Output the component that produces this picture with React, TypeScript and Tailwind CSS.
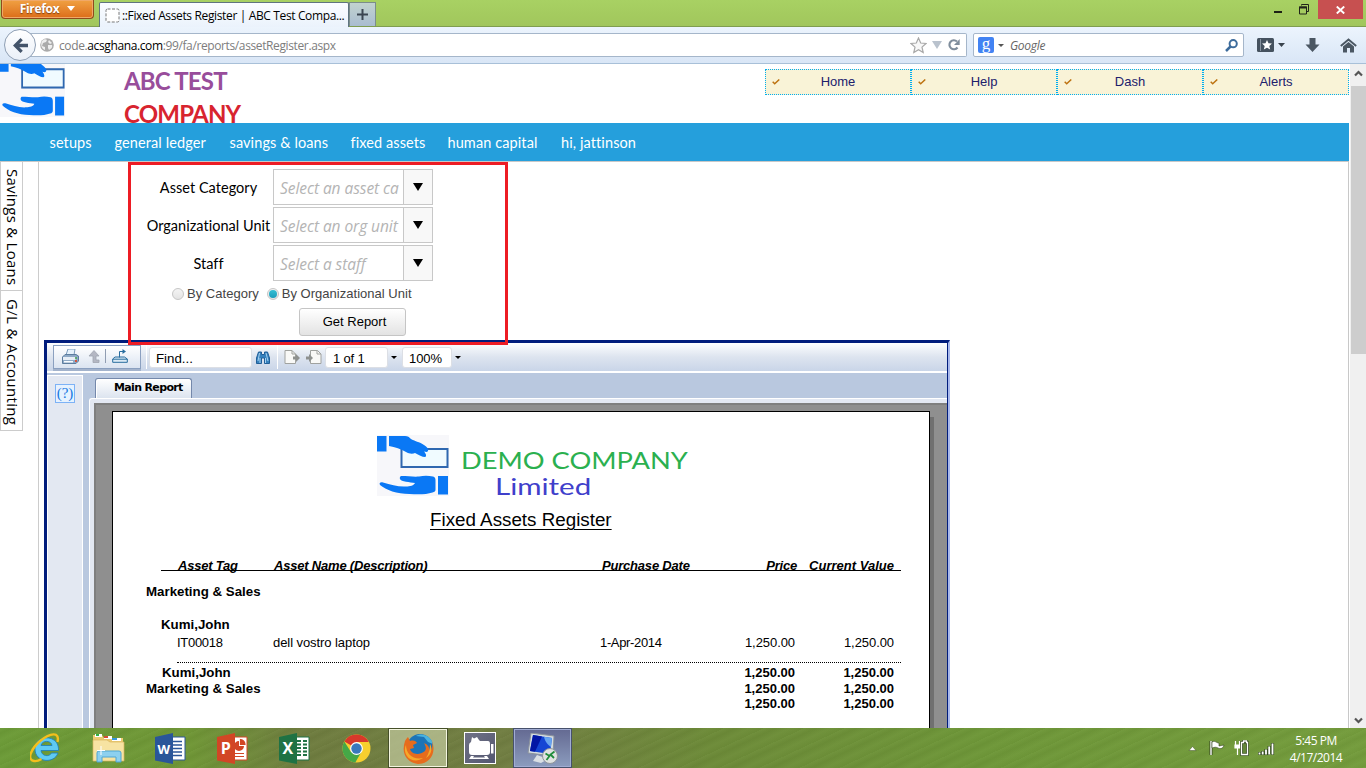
import type { ReactNode } from "react";

const SEGOE = "font-['Open_Sans','Noto_Sans',sans-serif]";
const CALIBRI = "font-['Lato',sans-serif]";

function HandsLogo({ className }: { className: string }) {
  return (
    <svg className={className} viewBox="0 0 72 61" preserveAspectRatio="none">
      <rect width="72" height="61" fill="#f7f7fa" />
      <rect x="24.500" y="14" width="46" height="18" fill="#f0fbff" stroke="#2f68b0" strokeWidth="2" />
      <path d="M0 1h9.500v15.500H0z" fill="#0a78f5" />
      <path d="M12 1h16c3 0 4 1 6 3 3 2 9 3 13 6 3 2 5 4 4 6-1 1.500-2 1-4 .5 2 2 3 5 1 5.500-3 0-6-2-10-4-2 1-6 1-9-1-5-3-11-5-17-6z" fill="#0a78f5" />
      <path d="M61 41h10v18.500H61z" fill="#0a78f5" />
      <path d="M24 41c7 0 13 1 18 .5 5-1 9-1 14 0 2 .5 2.500 2 2.500 4v9c0 2-1 2.500-3 3-6 2-14 2-23 1.500C20 59 9 55 3 50c-1-2 0-3 3-2.500 8 2 15 4.500 23 4 4 0 8-1 9-3.500-5-1-14-1-15-4-.5-1 0-2.500 1-3z" fill="#0a78f5" />
    </svg>
  );
}

function Chevron({ up = false }: { up?: boolean }) {
  return (
    <svg className="h-[9px] w-[9px]" viewBox="0 0 9 9">
      <path d={up ? "M1 6.500 4.500 3 8 6.500" : "M1 2.500 4.500 6 8 2.500"} fill="none" stroke="#555" strokeWidth="2.200" />
    </svg>
  );
}

function Triangle({ className }: { className: string }) {
  return (
    <svg className={className} viewBox="0 0 10 10" preserveAspectRatio="none">
      <path d="M0 0h10L5 10z" fill="currentColor" />
    </svg>
  );
}

function TitleBar() {
  return (
    <div className="flex h-[27px] items-start border-b border-[#7f9d50] bg-linear-to-b from-[#a8d163] to-[#a1c65c]">
      <div className="ml-px flex h-[19px] w-[93px] items-center justify-center gap-2 rounded-b-[4px] border border-t-0 border-[#8e4a1c] bg-linear-to-b from-[#f0a142] to-[#dc6d17] pb-px text-white shadow-[inset_0_0_0_1px_#f0a868]">
        <span className={`${SEGOE} text-[12px] font-bold leading-none tracking-[-0.300px] [text-shadow:0_1px_1px_#84400f]`}>Firefox</span>
        <Triangle className="h-[5px] w-[8px]" />
      </div>
      <div className="ml-[5px] mt-[2px] flex h-[26px] w-[250px] items-center rounded-t-[2px] border border-b-0 border-[#5f7480] bg-linear-to-b from-[#fbfdff] to-[#eaf2fc] pl-[5px]">
        <svg className="h-[15px] w-[15px] shrink-0" viewBox="0 0 15 15">
          <rect x="1" y="1" width="13" height="13" rx="1.500" fill="#fff" stroke="#777" strokeDasharray="3 1.500" />
        </svg>
        <span className={`${SEGOE} ml-[2px] whitespace-nowrap text-[12px] tracking-[-0.360px] text-black`}>::Fixed Assets Register | ABC Test Compa...</span>
      </div>
      <div className="mt-[2px] flex h-[24px] w-[27px] items-center justify-center border border-b-0 border-[#7b8d8c] bg-linear-to-b from-[#c2d3cf] to-[#a9bcd0]">
        <svg className="h-[11px] w-[11px]" viewBox="0 0 11 11">
          <path d="M5.500 0v11M0 5.500h11" stroke="#3b4652" strokeWidth="2" />
        </svg>
      </div>
      <div className="ml-auto flex h-[19px] items-center">
        <div className="mr-[17px] mt-[5px] h-[2.500px] w-[8px] bg-[#1d2114]" />
        <svg className="mr-[9px] h-[11px] w-[10px]" viewBox="0 0 10 11">
          <path d="M2.500 1.500v-1h7v7H8M.5 3h7v7h-7z" fill="none" stroke="#20241a" />
          <path d="M0 3.500h8" stroke="#20241a" strokeWidth="2" />
        </svg>
        <div className="mr-[3px] flex h-[19px] w-[45px] items-center justify-center bg-[#c75050]">
          <svg className="h-[8px] w-[9px]" viewBox="0 0 9 8">
            <path d="M.8.5 8.200 7.500M8.200.5.8 7.500" stroke="#fff" strokeWidth="1.900" />
          </svg>
        </div>
      </div>
    </div>
  );
}

function Toolbar() {
  return (
    <div className="flex h-[37px] items-center border-b border-[#a8c0d8] bg-linear-to-b from-[#ecf4fd] to-[#d9e6f6]">
      <div className="z-10 ml-1 flex h-[32px] w-[32px] shrink-0 items-center justify-center rounded-full border border-[#8f9fb4] bg-linear-to-b from-white to-[#eaf0f8]">
        <svg className="h-[17px] w-[17px]" viewBox="0 0 17 17">
          <path d="M1 8.500 8.500 1l2.300 2.200L7.300 6.800H16v3.400H7.300l3.500 3.600L8.500 16z" fill="#44546a" />
        </svg>
      </div>
      <div className="-ml-2 flex h-[24px] w-[939px] items-center rounded-r-[2px] border border-l-0 border-[#a5b6ca] bg-white">
        <svg className="ml-[12px] h-[14px] w-[14px]" viewBox="0 0 14 14">
          <circle cx="7" cy="7" r="6.800" fill="#ababab" />
          <path d="M2 3c2-2 4-2 5-1l-1 2-3 1-1 3 3 1v3C2 11 0 7 2 3zM9 2l3 3-2 1-2-2zM8 7l4 0c1 2-1 4-3 5L8 10z" fill="#eee" />
        </svg>
        <div className={`${SEGOE} ml-[5px] pt-[2px] text-[12px] tracking-[-0.380px] text-[#7d7d7d]`}>
          code.<span className="text-black">acsghana.com</span>:99/fa/reports/assetRegister.aspx
        </div>
        <div className="ml-auto flex items-center">
          <svg className="mr-[5px] h-[17px] w-[17px]" viewBox="0 0 17 17">
            <path d="m8.500 1 2.200 5 5.300.5-4 3.600 1.200 5.400-4.700-2.800-4.700 2.800L5 10.100 1 6.500 6.300 6z" fill="#f8f8f8" stroke="#a8a8a8" strokeWidth="1.200" />
          </svg>
          <Triangle className="mr-[6px] h-[8px] w-[10px] text-[#b9c2cd]" />
          <svg className="mr-[6px] h-[12px] w-[12px]" viewBox="0 0 12 12">
            <path d="M9.500 8.500A4.500 4.500 0 1 1 9 2.500" fill="none" stroke="#7f8d9c" strokeWidth="2.100" />
            <path d="M11.700 0v6H6z" fill="#7f8d9c" />
          </svg>
        </div>
      </div>
      <div className="ml-[6px] flex h-[24px] w-[271px] items-center rounded-[2px] border border-[#a5b6ca] bg-white pl-1">
        <div className="flex h-4 w-4 items-center justify-center rounded-[2px] bg-[#4283f3] pb-[3px] font-['Liberation_Serif',serif] text-[17px] leading-none text-white">g</div>
        <Triangle className="ml-[4px] h-[3px] w-[6px] text-[#555]" />
        <span className={`${SEGOE} ml-[6px] pt-[2px] text-[12px] italic tracking-[-0.300px] text-[#666]`}>Google</span>
        <svg className="ml-auto mr-[5px] h-[13px] w-[13px]" viewBox="0 0 13 13">
          <path d="M1 12 5.500 7.500" stroke="#3d6c9c" strokeWidth="2.500" />
          <circle cx="8.200" cy="4.700" r="3.600" fill="#fff" stroke="#3d6c9c" strokeWidth="2" />
        </svg>
      </div>
      <svg className="ml-[13px] h-[14px] w-[17px]" viewBox="0 0 17 14">
        <rect width="17" height="14" rx="1.500" fill="#45525f" />
        <path d="M3.500 1v12" stroke="#8793a0" />
        <path d="m10 2 1.500 3.300 3.500.3-2.700 2.300.9 3.600L10 9.700l-3.200 1.800.9-3.600L5 5.600l3.500-.3z" fill="#fff" />
      </svg>
      <Triangle className="ml-[4px] h-[4px] w-[7px] text-[#39434d]" />
      <svg className="ml-[20px] h-[14px] w-[15px]" viewBox="0 0 15 14">
        <path d="M4.500 0h6v6.500h4L7.500 14 .5 6.500h4z" fill="#4b5763" />
      </svg>
      <svg className="ml-[20px] h-[15px] w-[17px]" viewBox="0 0 17 15">
        <path d="m.8 8 7.700-6.500L16.200 8" fill="none" stroke="#4b5763" strokeWidth="1.900" />
        <path d="M3 8.500 8.500 4 14 8.500V14.500h-4V10H7v4.500H3z" fill="#4b5763" />
      </svg>
    </div>
  );
}

const quickLinks = ["Home", "Help", "Dash", "Alerts"];
const menu = [
  { text: "setups", cls: "w-[65px]" },
  { text: "general ledger", cls: "w-[115px]" },
  { text: "savings & loans", cls: "w-[121px]" },
  { text: "fixed assets", cls: "w-[97px]" },
  { text: "human capital", cls: "w-[113.500px]" },
  { text: "hi, jattinson", cls: "w-[100px]" },
];

function PageHeader() {
  return (
    <>
      <header className="flex h-[59px] items-start">
        <HandsLogo className="-mt-[9px] h-[62px] w-[65px] shrink-0" />
        <div className={`ml-[59px] text-[24px] font-bold leading-[33px] ${CALIBRI}`}>
          <div className="whitespace-nowrap tracking-[-0.800px] text-[#984d9b]">ABC TEST</div>
          <div className="whitespace-nowrap tracking-[-0.800px] text-[#d8242f]">COMPANY</div>
        </div>
        <div className="ml-auto mt-[5px] flex">
          {quickLinks.map((q) => (
            <a key={q} className="flex h-[26px] w-[146px] items-center border border-dotted border-[#00aeef] bg-[#f9f3d7] font-['Liberation_Sans',sans-serif] text-[13px] text-[#20206c]">
              <svg className="mb-px ml-[6px] h-[6px] w-[8px] shrink-0" viewBox="0 0 8 6">
                <path d="m.7 2.800 2 2L7.300.5" fill="none" stroke="#bd7210" strokeWidth="1.500" />
              </svg>
              <span className="mr-[14px] flex-1 text-center">{q}</span>
            </a>
          ))}
        </div>
      </header>
      <nav className={`flex h-[38px] items-center bg-[#259fdc] pl-[49.500px] pt-px text-[14.500px] tracking-[0.100px] text-white ${CALIBRI}`}>
        {menu.map((m) => (
          <a key={m.text} className={`whitespace-nowrap ${m.cls}`}>{m.text}</a>
        ))}
      </nav>
    </>
  );
}

function SideTabs() {
  return (
    <aside className={`flex w-[39px] shrink-0 border-r border-[#ccc] text-[15px] leading-[19px] text-black ${SEGOE}`}>
      <div className="w-[23px]">
        <div className="flex h-[129px] w-[23px] items-center justify-center border border-t-0 border-[#ccc] pl-[2px] pt-[3px] [writing-mode:vertical-rl]">
          <span className="whitespace-nowrap tracking-[0.250px]">Savings &amp; Loans</span>
        </div>
        <div className="flex h-[140px] w-[23px] items-center justify-center border border-t-0 border-[#ccc] pl-[2px] pt-[3px] [writing-mode:vertical-rl]">
          <span className="whitespace-nowrap tracking-[0.350px]">G/L &amp; Accounting</span>
        </div>
      </div>
    </aside>
  );
}

function SelectRow({ label, placeholder }: { label: string; placeholder: string }) {
  return (
    <div className="flex items-center">
      <label className={`w-[125px] whitespace-nowrap pt-[2px] text-center text-[14.500px] tracking-[0.030px] text-black ${CALIBRI}`}>{label}</label>
      <div className="ml-[2px] flex h-[36px] w-[160px] border border-[#c8c8c8]">
        <div className={`w-[129px] whitespace-nowrap pl-[6px] pt-px text-[15.500px] italic leading-[34px] tracking-[-0.060px] text-[#b4b4b4] ${SEGOE}`}>
          {placeholder}
        </div>
        <div className="flex w-[29px] items-center justify-center border-l border-[#c8c8c8] bg-[#f8f8f8]">
          <Triangle className="h-[8px] w-[10px] text-black" />
        </div>
      </div>
    </div>
  );
}

function Radio({ on = false, children }: { on?: boolean; children: ReactNode }) {
  return (
    <label className="flex items-center gap-[3px] whitespace-nowrap">
      <span className="flex h-3 w-3 items-center justify-center rounded-full border border-[#c6c6c6] bg-linear-to-b from-[#f4f4f4] to-[#e4e4e4]">
        {on && <span className="h-2 w-2 rounded-full bg-linear-to-b from-[#35bfd4] to-[#1b9dbb]" />}
      </span>
      <span className="pt-px">{children}</span>
    </label>
  );
}

function FilterForm() {
  return (
    <form className="relative z-10 ml-[89px] h-[183px] w-[380px] border-[3px] border-[#ed1c24]">
      <div className="flex flex-col gap-[2px] pl-[15px] pt-[4px]">
        <SelectRow label="Asset Category" placeholder="Select an asset ca" />
        <SelectRow label="Organizational Unit" placeholder="Select an org unit" />
        <SelectRow label="Staff" placeholder="Select a staff" />
      </div>
      <div className="mt-[4px] flex h-[17px] items-center gap-[8px] pl-[41px] font-['Liberation_Sans',sans-serif] text-[13px] tracking-[0.020px] text-[#444]">
        <Radio>By Category</Radio>
        <Radio on>By Organizational Unit</Radio>
      </div>
      <button type="button" className="ml-[168px] mt-[6px] flex h-[28px] w-[107px] items-center justify-center rounded-[3px] border border-[#c5c5c5] bg-linear-to-b from-white to-[#e3e3e3] pl-[4px] font-['Liberation_Sans',sans-serif] text-[13px] text-black">
        Get Report
      </button>
    </form>
  );
}

function ViewerToolbar() {
  return (
    <div className="flex h-[30px] items-center border-b-2 border-white bg-linear-to-b from-[#fdfeff] via-[#dde4ef] to-[#c9d5e8] font-['Liberation_Sans',sans-serif] text-[13.300px] text-black">
      <div className="ml-[6px] flex h-[24px] w-[88px] shrink-0 items-center border border-[#8ba0c0] bg-linear-to-b from-white to-[#dbe4f1] pb-[2px] shadow-[0_2px_0_#a3b3cc]">
        <svg className="ml-[8px] h-[15px] w-[17px]" viewBox="0 0 17 15">
          <path d="m4 6 2-6h7l-1 6z" fill="#e6f2fc" stroke="#7d9cbd" />
          <path d="M.5 8 3 5.500h11L16.500 7v5L14 14.500H.5z" fill="#8ea9c6" stroke="#5d7d9f" />
          <path d="M1 8h12.500v3H1z" fill="#e7eef6" />
          <path d="M2 12h9v1.500H2z" fill="#f7fbff" />
          <circle cx="14" cy="9" r="1" fill="#4aa84e" />
          <path d="M13 11h2v2h-2z" fill="#d2543e" />
        </svg>
        <svg className="ml-[9px] h-[13px] w-[12px]" viewBox="0 0 12 13">
          <path d="M6 .5 11 6H8v4h3v2.500H5V6H1z" fill="#b4b7c3" stroke="#a0a4b0" strokeWidth=".8" />
        </svg>
        <div className="ml-[5px] h-[14px] w-px bg-[#909db2]" />
        <svg className="ml-[6px] h-[14px] w-[16px]" viewBox="0 0 16 14">
          <path d="M.7 10 3 8h9.500l2.800 2v3.300H.7z" fill="#dbeaf5" stroke="#286d9e" />
          <path d="M.7 10.200h14.600M7.500 8.500V2.500h4" fill="none" stroke="#286d9e" />
          <path d="m10.500 0 3.500 2.500L10.500 5z" fill="#286d9e" />
        </svg>
      </div>
      <div className="ml-[5px] h-[24px] w-px bg-white" />
      <div className="ml-[2px] mt-px flex h-[21px] w-[103px] items-center rounded-[3px] border border-[#dcdfe5] bg-white pl-[6px] pt-[2px]">Find...</div>
      <svg className="ml-[4px] h-[13px] w-[14px]" viewBox="0 0 14 13">
        <path d="M2.500 1h3v2.500h3V1h3L13.500 7v5.500h-5V7h-3v5.500h-5V7z" fill="#3681bd" stroke="#205e98" />
        <path d="M3.500 2 2 10M10 2l2 8M4 7v5M9.500 7v5" stroke="#a6d2f2" />
      </svg>
      <div className="ml-[7px] h-[24px] w-px bg-white" />
      <svg className="ml-[6px] h-[14px] w-[16px]" viewBox="0 0 16 14">
        <path d="M1 .5h7L11.500 4v9.500H1z" fill="#f9f9f7" stroke="#a0a29f" />
        <path d="M8 .5V4h3.500" fill="none" stroke="#a0a29f" />
        <path d="M9 6.500h3V4l4 4-4 4V9.500H9z" fill="#8e918f" />
      </svg>
      <svg className="ml-[6px] h-[14px] w-[16px]" viewBox="0 0 16 14">
        <path d="M4.500.5h7L15 4v9.500H4.500z" fill="#f9f9f7" stroke="#a0a29f" />
        <path d="M11 .5V4h4" fill="none" stroke="#a0a29f" />
        <path d="M0 6.500h3V4l4 4-4 4V9.500H0z" fill="#8e918f" />
      </svg>
      <div className="ml-[3px] mt-px flex h-[21px] w-[63px] items-center rounded-[3px] border border-[#dcdfe5] bg-white pl-[7px] pt-[2px] text-[13px] tracking-[-0.150px]">1 of 1</div>
      <Triangle className="ml-[3px] h-[3px] w-[6px]" />
      <div className="ml-[5px] mt-px flex h-[21px] w-[50px] items-center rounded-[3px] border border-[#dcdfe5] bg-white pl-[6px] pt-[2px] text-[13px] tracking-[-0.100px]">100%</div>
      <Triangle className="ml-[3px] h-[3px] w-[6px]" />
    </div>
  );
}

function Amounts() {
  return (
    <div className="ml-auto flex text-right">
      <span>1,250.00</span>
      <span className="w-[99px]">1,250.00</span>
    </div>
  );
}

function ReportPage() {
  return (
    <div className="h-[400px] w-[818px] shrink-0 border border-black bg-white pr-[35px] font-['Liberation_Sans',sans-serif] text-[13px] text-black">
      <div className="mt-[23px] flex h-[60px] pl-[264px]">
        <HandsLogo className="h-[61px] w-[72px]" />
        <div className={`ml-[12px] ${CALIBRI}`}>
          <div className="mt-[12px] h-[26px] w-[200px] origin-left scale-x-[1.160] whitespace-nowrap text-[23.500px] leading-[26px] text-[#2bb04f]">DEMO COMPANY</div>
          <div className="ml-[34px] h-[25px] w-[90px] origin-left scale-x-[1.230] whitespace-nowrap text-[24px] leading-[25px] text-[#3f40cb]">Limited</div>
        </div>
      </div>
      <div className="ml-[317px] mt-[13px] h-[24px] whitespace-nowrap text-[18.800px] leading-[24px] underline decoration-1 underline-offset-[3px]">Fixed Assets Register</div>
      <div className="ml-[48px] mt-[25px] flex h-[14px] w-[740px] border-b border-black text-[13px] font-bold italic leading-[17px] tracking-[-0.200px]">
        <span className="w-[96px] pl-[17px]">Asset Tag</span>
        <span className="w-[345px] pl-[17px]">Asset Name (Description)</span>
        <span>Purchase Date</span>
        <span className="ml-auto">Price</span>
        <span className="mr-[7px] w-[97px] text-right tracking-[0.010px]">Current Value</span>
      </div>
      <div className="ml-[33px] mt-[12px] h-[17px] text-[13.300px] font-bold leading-[17px]">Marketing &amp; Sales</div>
      <div className="ml-[48px] mt-[16px] h-[17px] text-[13.300px] font-bold leading-[17px]">Kumi,John</div>
      <div className="ml-[64px] mt-px flex h-[17px] leading-[17px] tracking-[-0.070px]">
        <span className="w-[96px] tracking-[-0.300px]">IT00018</span>
        <span className="w-[327px]">dell vostro laptop</span>
        <span className="tracking-[-0.350px]">1-Apr-2014</span>
        <Amounts />
      </div>
      <div className="ml-[64px] mt-[11px] w-[724px] border-t border-dotted border-black" />
      <div className="ml-[49px] mt-px flex h-[16px] font-bold leading-[18px]">
        <span className="text-[13.300px]">Kumi,John</span>
        <Amounts />
      </div>
      <div className="ml-[33px] flex h-[15px] font-bold leading-[18px]">
        <span className="text-[13.300px]">Marketing &amp; Sales</span>
        <Amounts />
      </div>
      <div className="flex h-[16px] font-bold leading-[18px]">
        <Amounts />
      </div>
    </div>
  );
}

function ReportViewer() {
  return (
    <section className="-mt-[5px] ml-[5px] h-[420px] w-[906px] border-l-[3px] border-r-[2px] border-t-[3px] border-l-[#001c7c] border-r-[#a9b9ec] border-t-[#001c7c]">
      <div className="h-full border-r border-[#001c7c] bg-[#b9c8df]">
        <ViewerToolbar />
        <div className="flex h-[387px]">
          <div className="mt-[2px] flex w-[36px] shrink-0 justify-center border border-white bg-[#e3e8f2] pt-[8px]">
            <div className="flex h-[19px] w-[20px] items-center justify-center border border-[#7db2f6] bg-[#e6f2ff] font-['Liberation_Serif',serif] text-[15px] leading-none text-[#1779df]">(?)</div>
          </div>
          <div className="ml-[6px] flex min-w-0 flex-1 flex-col">
            <div className="flex h-[25px] shrink-0 items-end pl-[6px]">
              <div className="h-[20px] w-[97px] whitespace-nowrap rounded-t-[3px] border border-b-0 border-[#7488ab] bg-linear-to-b from-white to-[#dce4ef] pl-[18px] font-['DejaVu_Sans',sans-serif] text-[11px] font-bold leading-[18px] tracking-[-0.650px] text-black shadow-[inset_1px_1px_0_#fff]">
                Main Report
              </div>
            </div>
            <div className="min-h-0 flex-1 rounded-tl-[3px] border-l border-t border-white bg-[#e3e8f2] pl-[4px] pt-[4px]">
              <div className="flex h-full overflow-hidden border-l-2 border-t-2 border-[#7f7f7f] bg-[#8f8f8f] pl-[16px] pt-[6px]">
                <ReportPage />
                <div className="mt-[6px] w-[4px] bg-[#707070]" />
              </div>
            </div>
          </div>
        </div>
      </div>
    </section>
  );
}

function OfficeIcon({ letter, kind }: { letter: string; kind: "w" | "p" | "x" }) {
  const color = kind === "w" ? "#2a5699" : kind === "p" ? "#d24625" : "#1f7244";
  return (
    <svg className="h-[31px] w-[31px]" viewBox="0 0 31 31">
      <path d="M15 4h15v23H15z" fill="#fff" stroke={color} />
      {kind === "w" && <path d="M18 8.500h9M18 12h9M18 15.500h9M18 19h9M18 22.500h9" stroke={color} strokeWidth="1.500" />}
      {kind === "p" && (
        <>
          <path d="M22 8a5 5 0 1 0 5 5h-5z" fill={color} />
          <path d="M23.500 6.500a5 5 0 0 1 4.500 5h-4.500zM18 20.500h9M18 23.500h9" fill={color} stroke={color} strokeWidth="1.200" />
        </>
      )}
      {kind === "x" && <path d="M18 8h4M24 8h4M18 11.500h4M24 11.500h4M18 15h4M24 15h4M18 18.500h4M24 18.500h4M18 22h4M24 22h4" stroke={color} strokeWidth="2" />}
      <path d="M0 4 18 0v31L0 27.500z" fill={color} />
      <text x="8.800" y="20.500" textAnchor="middle" fill="#fff" fontFamily="Open Sans, sans-serif" fontWeight="700" fontSize={kind === "w" ? 13 : 16}>{letter}</text>
    </svg>
  );
}

function Slot({ children, className = "" }: { children: ReactNode; className?: string }) {
  return <div className={`flex h-[40px] w-[62px] shrink-0 items-center justify-center ${className}`}>{children}</div>;
}

function Taskbar() {
  return (
    <footer className="flex h-[40px] items-center bg-[repeating-linear-gradient(155deg,#ffffff06_0px,#00000009_5px,#ffffff05_11px,#00000006_17px),linear-gradient(90deg,#6c9b37_0%,#709736_14%,#6f7d3f_22%,#717e42_38%,#6d8b38_52%,#6e9738_72%,#749c3c_100%)] pl-[15px]">
      <Slot>
        <svg className="h-[32px] w-[32px]" viewBox="0 0 32 32">
          <path d="M28.500 18.500H11c.5 5.500 8 7 10.500 2.500h6.500C24.500 32 4.500 31 5 16.500 5.500 2 29.500 2 28.500 18.500zM11 13.500h11c-.6-5.500-10-5.500-11 0z" fill="#5fcaf3" stroke="#2281b9" strokeWidth=".9" />
          <path d="M27.500 10C30-1 20 1 10 9 0 18-3 28 4 29c2 .4 5-.5 7.500-2" fill="none" stroke="#f3bf1c" strokeWidth="2.400" />
        </svg>
      </Slot>
      <Slot>
        <svg className="h-[32px] w-[33px]" viewBox="0 0 33 32">
          <path d="M1 3h9l2 3h19v21H1z" fill="#edcb71" />
          <path d="M3 2h7v3H3zM12 4h8v3h-8zM20 6h9v3h-9z" fill="#fff" />
          <path d="M4 2h3v2H4z" fill="#31b145" /><path d="M12 4h4v2h-4z" fill="#d74c32" /><path d="M20 6h5v2h-5z" fill="#3499df" />
          <path d="M1 8h14l3 2h14v19H1z" fill="#f7e3a2" stroke="#d9b45f" strokeWidth=".7" />
          <path d="M5 30v-9q0-2 2-2h20q2 0 2 2v9h-5v-5H10v5z" fill="#8dd0ef" stroke="#4fa6d3" />
          <path d="M9 14v9M5 18.500h8" stroke="#fff" />
        </svg>
      </Slot>
      <Slot className="pl-px"><OfficeIcon letter="W" kind="w" /></Slot>
      <Slot className="pl-px"><OfficeIcon letter="P" kind="p" /></Slot>
      <Slot><OfficeIcon letter="X" kind="x" /></Slot>
      <Slot>
        <svg className="h-[29px] w-[29px]" viewBox="0 0 29 29">
          <circle cx="14.500" cy="14.500" r="14" fill="#f6cf2e" />
          <path d="M14.500 14.500 2.300 7.500A14 14 0 0 1 26.800 8H14.500z" fill="#d8392b" />
          <path d="M2.300 7.500a14 14 0 0 0 11 21l6-10.500-4.800-3.500-5.700 3.200z" fill="#45a847" />
          <circle cx="14.500" cy="14.500" r="6.400" fill="#fff" />
          <circle cx="14.500" cy="14.500" r="5.200" fill="#3979bd" />
        </svg>
      </Slot>
      <Slot>
        <div className="flex h-[38px] w-[58px] items-center justify-center border border-[#f3f5df] bg-[#c3cb9f]/70 outline outline-[#46502a]">
          <svg className="h-[31px] w-[31px]" viewBox="0 0 31 31">
            <circle cx="17" cy="14" r="13" fill="#1c74b7" />
            <path d="M13 3c6-4 15 0 17 8l-5-2-4-5z" fill="#49b3df" />
            <path d="M2 8c1-2 2-3 3-4l2 4c4-1 6 0 7 2l-4 2 1 3-4 1c1 5 9 7 15 2 2-3 0-6-1-8 5 2 6 6 5 10 3-3 4-7 3-12 5 13-3 23-14 23C3 29-2 20 2 8z" fill="#e66c1d" />
            <path d="M3 12c0 9 7 15 17 13-5 4-13 3-16-2-2-3-3-7-1-11zM27 11c3 5 1 11-4 14 3-5 4-9 4-14z" fill="#f7a829" />
          </svg>
        </div>
      </Slot>
      <Slot>
        <div className="flex h-[32px] w-[32px] items-center justify-center border border-white bg-linear-to-br from-[#707286] to-[#535771]">
          <svg className="h-[26px] w-[27px]" viewBox="0 0 27 26">
            <path d="M4 7 5 2l2 1.500L10 2l2 3 1 1h8q2 0 2 3v8q0 3-3 3H5q-3 0-3-3v-7q0-2 2-3zM24 9h2.500v9.500H24zM4 21h3l-2 3H2zM17 21h3l2 3h-3zM4 22.500h16V24H4z" fill="#fff" />
          </svg>
        </div>
      </Slot>
      <Slot>
        <div className="flex h-[38px] w-[57px] items-center justify-center border border-[#a1acd3] bg-linear-to-b from-[#656b93] to-[#8b9bbd] outline outline-[#47516c]">
          <svg className="h-[31px] w-[31px]" viewBox="0 0 31 31">
            <path d="m4 0 23 3-1 20L1 20z" fill="#d5dce1" stroke="#8b939c" />
            <path d="m6 2 19 3-2 16-20-3z" fill="#1546d4" />
            <path d="m6 2 9 1.500L8 18.700l-5-.7z" fill="#0317a4" />
            <path d="M17 3.800 25 5l-1 9c-3-2-6-5-7-10.200z" fill="#68a5ef" />
            <path d="m10 22-4 6 8 2 7-4z" fill="#dadfe4" />
            <circle cx="23" cy="23" r="7.500" fill="#e0e2e1" stroke="#90969b" />
            <path d="m18.500 20.500 4 2.500-3 4M27.500 18.500l-4 3 3.500 3.500" fill="none" stroke="#208c3b" strokeWidth="1.800" />
          </svg>
        </div>
      </Slot>
      <div className="ml-auto flex items-center">
        <svg className="mr-[12px] h-[5px] w-[9px]" viewBox="0 0 9 5"><path d="M1 4.500h7L4.500.5z" fill="#fff" stroke="#425128" strokeWidth=".5" /></svg>
        <svg className="mr-[8px] h-[16px] w-[17px]" viewBox="0 0 17 16">
          <path d="M2 1v14" stroke="#34451e" strokeWidth="3" /><path d="M2 1v14" stroke="#fff" strokeWidth="1.400" />
          <path d="M3 2c3-2 4 1 7 1v3c2 0 3-1 5-1-1 4-4 4-6 3-2-1-3-1-6 0z" fill="#fff" stroke="#34451e" strokeWidth=".6" />
        </svg>
        <svg className="mr-[9px] h-[16px] w-[15px]" viewBox="0 0 15 16">
          <path d="M3.500 8v7M1.500 1v4M5.500 1v4M1 5h5v3H1z" fill="#fff" stroke="#fff" strokeWidth="1.200" />
          <path d="M9.500 1h3v1.500h1v12h-6v-12h2z" fill="#648739" stroke="#2f4120" strokeWidth="2.600" />
          <path d="M9.500 1h3v1.500h1v12h-6v-12h2z" fill="none" stroke="#fff" strokeWidth="1.300" />
        </svg>
        <svg className="mr-[14px] h-[13px] w-[17px]" viewBox="0 0 17 13">
          <path d="M1.500 13v-3M4.700 13V9M8 13V7M11.200 13V4M14.500 13V1" stroke="#344c20" strokeWidth="3.200" />
          <path d="M1.500 12.500v-2M4.700 12.500V9.500M8 12.500V7.500M11.200 12.500V4.500M14.500 12.500V1.500" stroke="#fff" strokeWidth="1.800" />
        </svg>
        <div className={`mr-[23px] w-[54px] whitespace-nowrap pt-[2px] text-center text-[12px] leading-[17px] tracking-[-0.500px] text-white ${SEGOE}`}>
          <div>5:45 PM</div>
          <div>4/17/2014</div>
        </div>
      </div>
    </footer>
  );
}

export default function App() {
  return (
    <div className="flex h-[768px] w-[1366px] flex-col overflow-hidden bg-white">
      <TitleBar />
      <Toolbar />
      <div className="flex h-[664px] overflow-hidden">
        <div className="w-[1349px] shrink-0">
          <PageHeader />
          <main className="flex h-[567px] overflow-hidden border-r border-t border-[#c8c8c8]">
            <SideTabs />
            <div className="min-w-0 flex-1">
              <FilterForm />
              <ReportViewer />
            </div>
          </main>
        </div>
        <div className="ml-px flex w-[16px] flex-col items-center bg-[#f0f0f0]">
          <div className="flex h-[22px] items-center pb-[4px]"><Chevron up /></div>
          <div className="h-[268px] w-[15px] bg-[#cdcdcd]" />
          <div className="mt-auto flex h-[16px] items-center"><Chevron /></div>
        </div>
      </div>
      <Taskbar />
    </div>
  );
}
